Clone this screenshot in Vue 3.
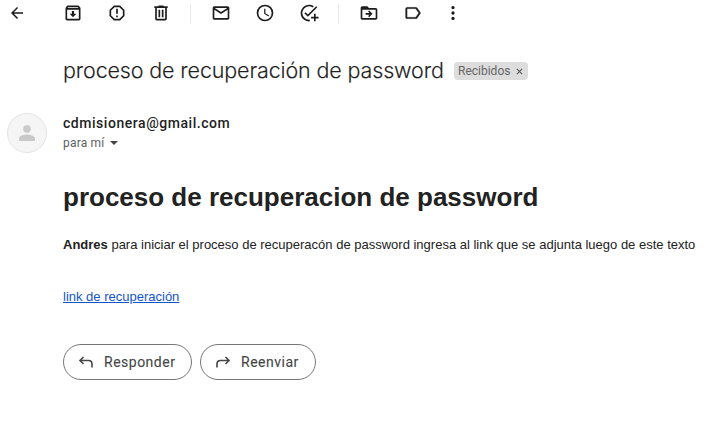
<script setup>
const groups = [
  ['back'],
  ['archive', 'spam', 'trash'],
  ['mail', 'clock', 'task'],
  ['move', 'label', 'more'],
]
const icons = {
  back: 'M20 11H7.8l5.6-5.6L12 4l-8 8 8 8 1.4-1.4L7.8 13H20z',
  archive: 'M20.5 5.2l-1.4-1.7C18.9 3.2 18.5 3 18 3H6c-.5 0-.9.2-1.2.5L3.5 5.2C3.2 5.6 3 6 3 6.500V19c0 1.100.9 2 2 2h14c1.100 0 2-.9 2-2V6.500c0-.5-.2-.9-.5-1.300zM6.200 5h11.600l.8 1H5.400zM5 19V8h14v11zM13.300 9.500h-2.600V13H8l4 4 4-4h-2.700z',
  spam: 'M15.700 3H8.300L3 8.300v7.400L8.300 21h7.400l5.300-5.300V8.300zM19 14.900L14.900 19H9.100L5 14.900V9.100L9.100 5h5.800L19 9.100zM11 7h2v6h-2zM11 15h2v2h-2z',
  trash: 'M15 4V3H9v1H4v2h1v13c0 1.100.9 2 2 2h10c1.100 0 2-.9 2-2V6h1V4zM17 19H7V6h10zM9 8h2v9H9zM13 8h2v9h-2z',
  mail: 'M20 4H4c-1.100 0-2 .9-2 2v12c0 1.100.9 2 2 2h16c1.100 0 2-.9 2-2V6c0-1.100-.9-2-2-2zM19.500 6L12 10.800 4.500 6zM20 18H4V8l8 5.200L20 8z',
  clock: 'M12 2a10 10 0 1 0 0 20 10 10 0 0 0 0-20zM12 20a8 8 0 1 1 0-16 8 8 0 0 1 0 16zM12.500 7H11v6l5.200 3.200.8-1.300-4.500-2.700z',
  task: 'M22 5.200L10.600 16.600l-4.200-4.200L7.800 11l2.800 2.800L20.600 3.800zM12 20a8 8 0 1 1 4.400-14.700l1.400-1.400A10 10 0 1 0 13 22v-2.100zM18 13v3.500h-3.500v2H18V22h2v-3.500h3.500v-2H20V13z',
  move: 'M20 6h-8l-2-2H4c-1.100 0-2 .9-2 2v12c0 1.100.9 2 2 2h16c1.100 0 2-.9 2-2V8c0-1.100-.9-2-2-2zM20 18H4V8h16zM12.200 17l4-4-4-4-1.300 1.300L12.600 12H8v2h4.600l-1.700 1.700z',
  label: 'M17 5.800C16.600 5.300 16.100 5 15.400 5H5c-1.100 0-2 .9-2 2v10c0 1.100.9 2 2 2h10.400c.7 0 1.200-.3 1.600-.8L21.300 12zM15.200 17H5V7h10.200L18.800 12z',
  more: 'M12 3.500a2 2 0 1 0 0 4 2 2 0 0 0 0-4zM12 10a2 2 0 1 0 0 4 2 2 0 0 0 0-4zM12 16.500a2 2 0 1 0 0 4 2 2 0 0 0 0-4z',
}
</script>

<template>
  <main class="mail">
    <nav class="toolbar">
      <div v-for="group in groups" :key="group[0]" class="group">
        <button v-for="name in group" :key="name" :class="['tool', name]">
          <svg viewBox="0 0 24 24"><path fill-rule="evenodd" :d="icons[name]" /></svg>
        </button>
      </div>
    </nav>
    <header class="subject">
      <h2><span>proceso de recuperación de password</span></h2>
      <div class="chip">
        <span>Recibidos</span>
        <svg viewBox="0 0 8 8"><path d="M1 1l6 6M7 1L1 7" /></svg>
      </div>
    </header>
    <section class="sender">
      <div class="avatar">
        <svg viewBox="0 0 16 16"><circle cx="8" cy="4" r="3.800" /><path d="M0 16v-2.500C0 10.800 5 9.500 8 9.500s8 1.300 8 4V16z" /></svg>
      </div>
      <div class="who">
        <div class="address">cdmisionera@gmail.com</div>
        <div class="to"><span>para mí</span><i class="caret"></i></div>
      </div>
    </section>
    <article class="body">
      <h1>proceso de recuperacion de password</h1>
      <p><b>Andres</b> para iniciar el proceso de recuperacón de password ingresa al link que se adjunta luego de este texto</p>
      <a href="#">link de recuperación</a>
    </article>
    <footer class="actions">
      <button class="reply">
        <svg viewBox="0 0 16 14"><path d="M5.500 2L2 5.500 5.500 9M2 5.500H10.500q3.500 0 3.500 3.500v3.500" /></svg>
        <span>Responder</span>
      </button>
      <button class="forward">
        <svg viewBox="0 0 16 14"><path d="M10.500 2l3.500 3.500L10.500 9M14 5.500H5.500Q2 5.500 2 9v3.500" /></svg>
        <span>Reenviar</span>
      </button>
    </footer>
  </main>
</template>

<style>
body { background: #fff; }
</style>

<style scoped>
.mail { height: 422px; overflow: hidden; font-family: "Liberation Sans", Arial, sans-serif; color: #222; white-space: nowrap; }
button { border: 0; background: none; padding: 0; margin: 0; font: inherit; }
svg { display: block; flex: none; }
.toolbar { display: flex; height: 26px; padding-left: 7px; }
.group { display: flex; align-items: center; gap: 24px; }
.group:first-child { margin-right: 36px; }
.group:nth-child(3), .group:nth-child(4) { margin-left: 19px; padding-left: 21px; background: linear-gradient(#ebebeb, #ebebeb) 0 4px / 1px 20px no-repeat; }
.tool { width: 20px; height: 20px; }
.tool svg { width: 20px; height: 20px; fill: #1c1c1c; }
.back svg { width: 18px; height: 18px; margin: 1px; }
.label svg path { stroke: #1c1c1c; stroke-width: .2; }
.more { margin-left: -4px; }
.subject { display: flex; align-items: center; height: 32px; margin-top: 28px; padding-left: 63px; }
.subject h2 { width: 391px; margin: 0; font: 300 21.500px/32px Inter, sans-serif; letter-spacing: -.14px; color: #1f1f1f; -webkit-text-stroke: .15px #1f1f1f; }
.chip { display: flex; align-items: center; gap: 6px; height: 18px; width: 74px; box-sizing: border-box; padding-left: 4px; margin-top: 1px; border-radius: 4px; background: #ddd; color: #666; font: 12px/18px Roboto, sans-serif; }
.chip svg { width: 7px; height: 7px; margin-top: 2px; stroke: #555; stroke-width: 1.200; }
.sender { display: flex; margin: 27px 0 0 7px; }
.avatar { width: 40px; height: 40px; box-sizing: border-box; border: 1px solid #e4e4e4; border-radius: 50%; background: #f5f5f5; display: grid; place-items: center; }
.avatar svg { width: 16px; height: 16px; fill: #c9c9c9; }
.who { margin-left: 16px; }
.address { height: 20px; font: 500 14px/20px Roboto, sans-serif; letter-spacing: .54px; color: #1f1f1f; }
.to { display: flex; align-items: center; height: 20px; font: 12px/20px Roboto, sans-serif; letter-spacing: .2px; color: #5e5e5e; }
.caret { border: 4px solid transparent; border-top-color: #444; border-bottom: 0; margin-left: 5px; }
.body { padding-left: 63px; margin-top: 28px; }
.body h1 { margin: 0; font-size: 26px; line-height: 32px; }
.body p { margin: 23px 0 0; font-size: 13px; line-height: 18px; }
.body a { display: block; width: max-content; margin-top: 34px; font-size: 13px; line-height: 18px; color: #15c; }
.actions { display: flex; gap: 8px; margin: 38px 0 0 63px; }
.actions button { display: flex; align-items: center; width: 129px; height: 36px; box-sizing: border-box; border: 1px solid #747775; border-radius: 18px; padding-left: 14px; gap: 10px; color: #444746; font: 400 14px/20px Roboto, sans-serif; letter-spacing: .5px; -webkit-text-stroke: .1px #444746; }
.actions .forward { width: 116px; }
.actions svg { width: 16px; height: 14px; fill: none; stroke: #444746; stroke-width: 1.600; }
</style>
